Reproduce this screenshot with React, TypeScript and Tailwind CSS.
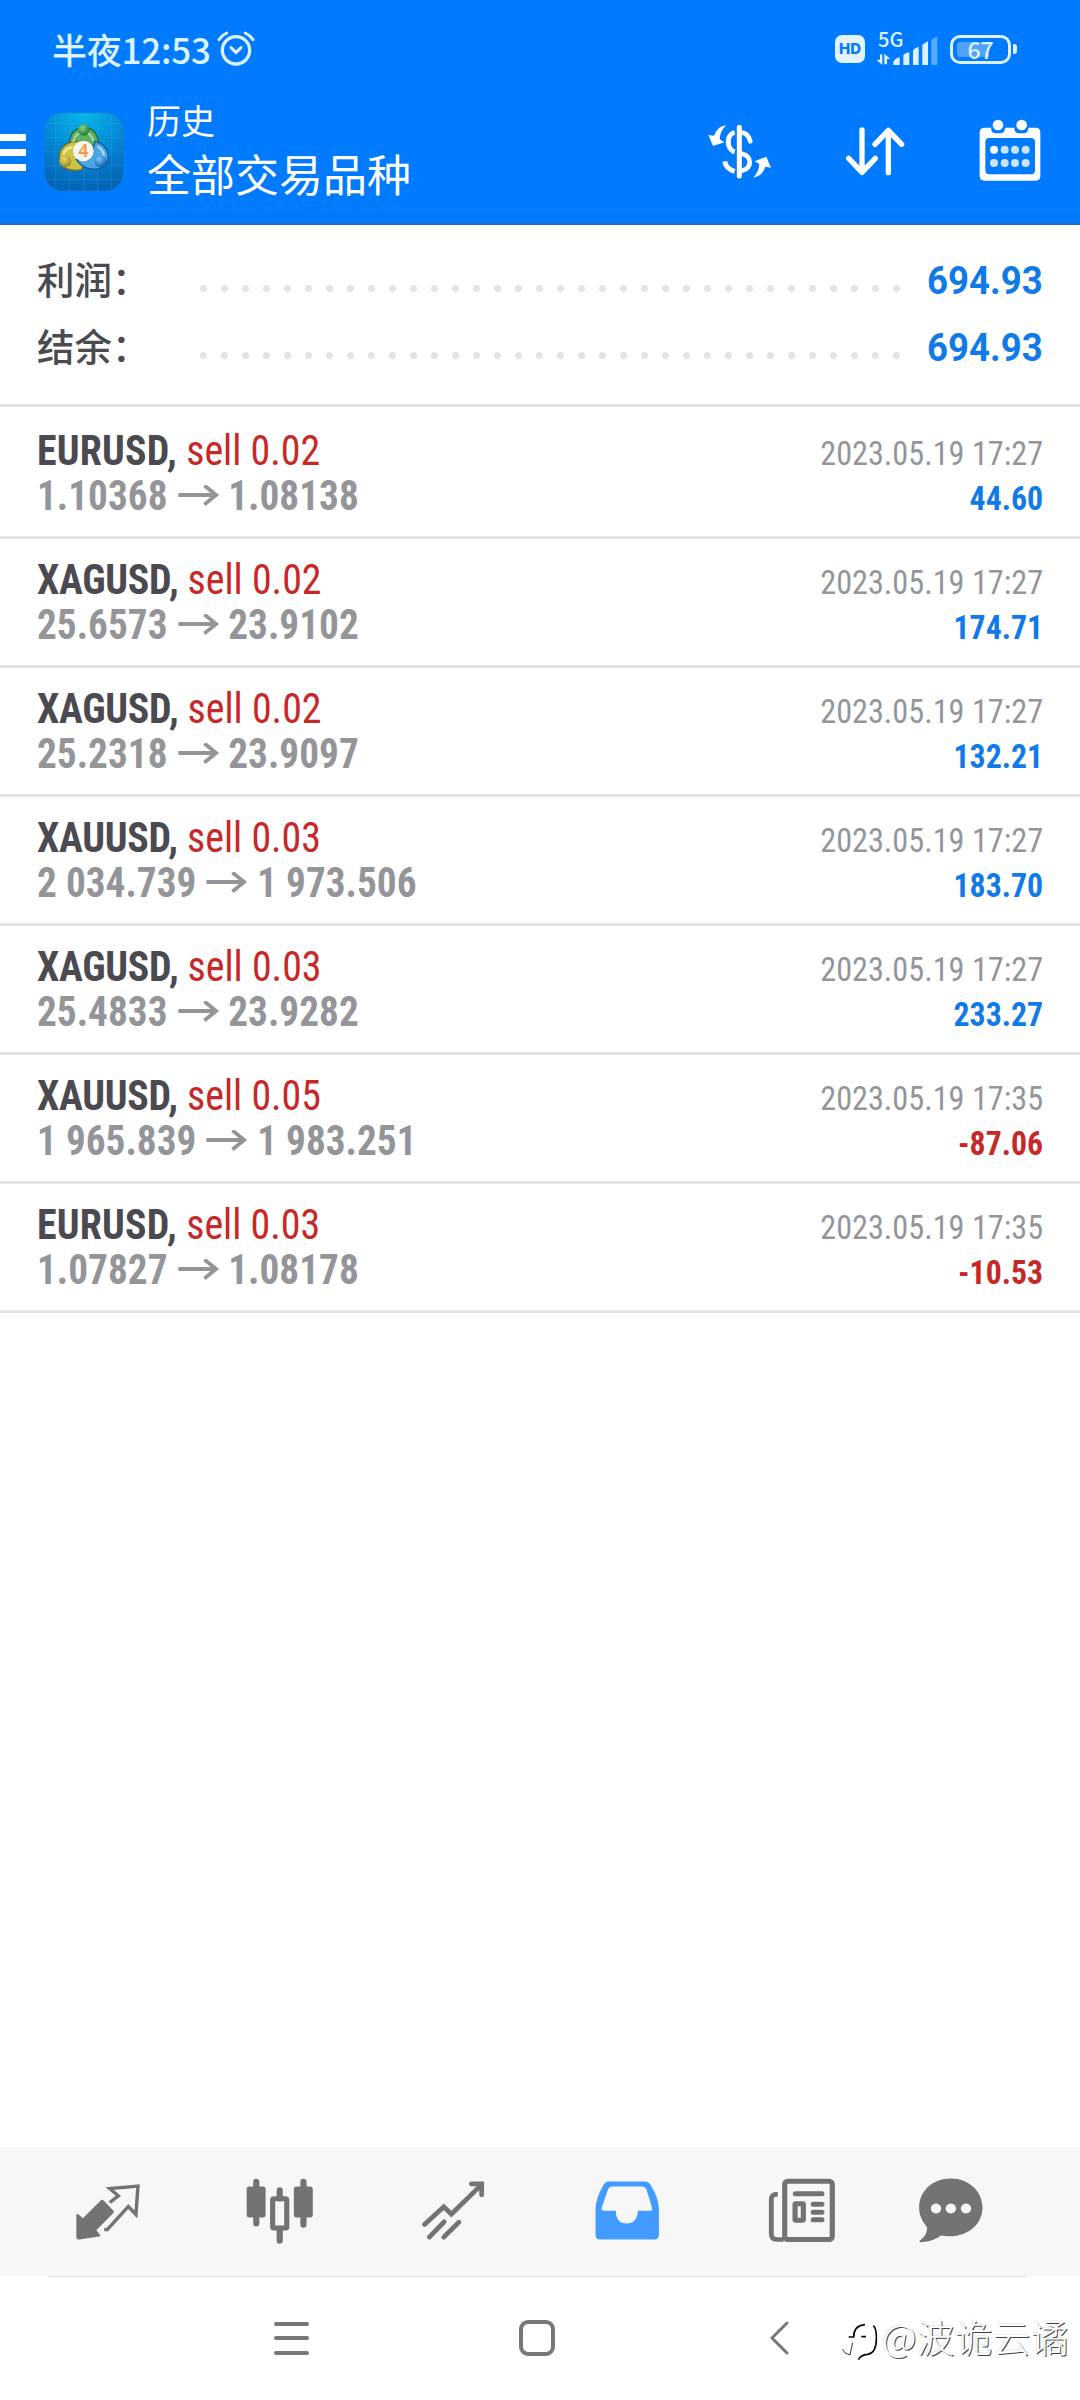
import { ReactNode } from 'react'

interface Deal {
  symbol: string
  volume: string
  open: string
  close: string
  time: string
  profit: string
}

const deals: Deal[] = [
  { symbol: 'EURUSD', volume: '0.02', open: '1.10368', close: '1.08138', time: '2023.05.19 17:27', profit: '44.60' },
  { symbol: 'XAGUSD', volume: '0.02', open: '25.6573', close: '23.9102', time: '2023.05.19 17:27', profit: '174.71' },
  { symbol: 'XAGUSD', volume: '0.02', open: '25.2318', close: '23.9097', time: '2023.05.19 17:27', profit: '132.21' },
  { symbol: 'XAUUSD', volume: '0.03', open: '2 034.739', close: '1 973.506', time: '2023.05.19 17:27', profit: '183.70' },
  { symbol: 'XAGUSD', volume: '0.03', open: '25.4833', close: '23.9282', time: '2023.05.19 17:27', profit: '233.27' },
  { symbol: 'XAUUSD', volume: '0.05', open: '1 965.839', close: '1 983.251', time: '2023.05.19 17:35', profit: '-87.06' },
  { symbol: 'EURUSD', volume: '0.03', open: '1.07827', close: '1.08178', time: '2023.05.19 17:35', profit: '-10.53' }
]

const StatusBar = () => (
  <div className="flex h-[98px] items-center justify-between pl-[52px] pr-[63px] text-[#dcf3ff]">
    <div className="flex items-center">
      <span className="text-[35px] leading-[50px] font-medium tracking-[-.2px] whitespace-nowrap">半夜12:53</span>
      <svg className="ml-[6px] h-[36px] w-[38px]" viewBox="648 95 114 108" fill="none" stroke="currentColor" strokeLinecap="round">
        <circle cx="705" cy="153" r="41" strokeWidth="10" />
        <path d="M690 145l15 15 15-15" strokeWidth="9" strokeLinejoin="round" />
        <path d="M654 121q9-13 23-20M756 121q-9-13-23-20" strokeWidth="9" />
      </svg>
    </div>
    <div className="flex items-center">
      <span className="flex h-[28px] w-[30px] items-center justify-center rounded-[7px] bg-[#e2f2ff] font-['Inter'] text-[15px] font-extrabold text-[#007aff]">
        HD
      </span>
      <div className="relative ml-[11px] h-[34px] w-[62px]">
        <span className="absolute -top-[3px] left-[2px] text-[20px] leading-[20px] font-medium">5G</span>
        <svg className="absolute inset-0 h-[34px] w-[62px]" viewBox="587 93 186 102" fill="currentColor">
          <path d="M599 160h7v32l-18-16h11zM612 190v-32l18 16h-10v16z" />
          <path d="M639 192v-10q8-12 19-13v23zM669 192v-30q8-8 18-8v38zM698 192v-44q7-9 17-11v55zM726 192v-60q8-8 17-11v71z" />
          <path d="M753 192v-76q8-8 18-9v85z" opacity=".4" />
        </svg>
      </div>
      <div className="relative ml-[12px] flex h-[29px] w-[61px] items-center rounded-[10px] border-[3px] border-current p-[4px]">
        <span className="h-full w-[32px] rounded-[3px] bg-[#4fa3ff]" />
        <span className="absolute inset-0 flex items-center justify-center text-[23px] leading-none font-medium">67</span>
      </div>
      <span className="ml-[2px] h-[10px] w-[4px] rounded-r-[3px] bg-current" />
    </div>
  </div>
)

const AppLogo = () => (
  <svg className="h-[80px] w-[80px]" viewBox="43 36 240 240">
    <defs>
      <radialGradient id="sky" cx=".5" cy="0" r="1">
        <stop offset="0" stopColor="#06b8ea" />
        <stop offset=".55" stopColor="#0486d4" />
        <stop offset="1" stopColor="#0463b4" />
      </radialGradient>
      <radialGradient id="green" cx=".4" cy=".3" r=".7">
        <stop offset="0" stopColor="#8fd08a" />
        <stop offset="1" stopColor="#1c7a35" />
      </radialGradient>
      <radialGradient id="gold" cx=".4" cy=".3" r=".7">
        <stop offset="0" stopColor="#eadf68" />
        <stop offset="1" stopColor="#94851a" />
      </radialGradient>
      <radialGradient id="azure" cx=".4" cy=".3" r=".7">
        <stop offset="0" stopColor="#7cc6f5" />
        <stop offset="1" stopColor="#1263b0" />
      </radialGradient>
    </defs>
    <rect x="44" y="38" width="237" height="235" rx="54" fill="url(#sky)" stroke="#1c78cf" strokeWidth="2" />
    <path d="M46 71h233M44 113h237M44 155h237M44 197h237M50 239h225M78 44v222M120 38v235M162 38v235M204 38v235M246 44v222" stroke="#3fb0ec" strokeWidth="2" opacity=".35" />
    <g strokeWidth="4">
      <path d="M120 152c-6-45 12-69 42-69s52 24 42 69l-24 20-42-16z" fill="#5fae62" stroke="#1d6b36" />
      <path d="M152 126c-35-6-63 14-63 48 0 28 28 42 66 35l14-32z" fill="#cfc345" stroke="#7c701a" />
      <path d="M196 124c35 9 46 38 36 62-14 30-68 30-92-8l44-12z" fill="#4ba4e3" stroke="#0f569c" />
    </g>
    <path d="M130 126q7-28 32-29 22 1 30 27" fill="none" stroke="#a9d8a2" strokeWidth="6" />
    <path d="M101 162q8-18 28-21" fill="none" stroke="#efe894" strokeWidth="7" />
    <path d="M203 139q20 10 19 30" fill="none" stroke="#a5d9fa" strokeWidth="7" />
    <circle cx="162" cy="90" r="17" fill="url(#green)" />
    <circle cx="107" cy="184" r="18" fill="url(#gold)" />
    <circle cx="212" cy="184" r="18" fill="url(#azure)" />
    <circle cx="161" cy="153" r="31" fill="#f4f6f4" />
    <text x="161" y="172" textAnchor="middle" fontFamily="Open Sans, sans-serif" fontSize="54" fontWeight="600" fill="#f79433">4</text>
  </svg>
)

const Toolbar = () => (
  <div className="flex h-[123px] items-start text-white">
    <div className="flex w-[26px] flex-col gap-[8px] pt-[36px]">
      <span className="h-[7px] bg-current" />
      <span className="h-[7px] bg-current" />
      <span className="h-[7px] bg-current" />
    </div>
    <div className="ml-[18px] pt-[14px]">
      <AppLogo />
    </div>
    <div className="ml-[23px] whitespace-nowrap">
      <div className="text-[34px] leading-[44px]">历史</div>
      <div className="text-[44px] leading-[62px]">全部交易品种</div>
    </div>
    <svg className="ml-auto mt-[24px] h-[60px] w-[66px]" viewBox="81 366 198 180" fill="none" stroke="currentColor">
      <path d="M164 397c-26 6-25 51 0 59M134 484q4 22 30 30" strokeWidth="15" />
      <path d="M178 382v146" strokeWidth="15" strokeLinecap="round" />
      <path d="M186 398q19 2 25 26M186 461c31 8 31 43 0 51" strokeWidth="14" strokeLinecap="round" />
      <path d="M139 376q-28 3-37 31l-17-2 14 33 34-11-14-9q1-25 20-42zM219 533q28-3 37-33l17 3-14-33-35 14 14 8q-1 24-19 41z" fill="currentColor" stroke="none" />
    </svg>
    <svg className="ml-[72px] mt-[24px] h-[60px] w-[60px]" viewBox="496 366 180 180" fill="none" stroke="currentColor" strokeWidth="16" strokeLinecap="round" strokeLinejoin="round">
      <path d="M547 390v127M507 475l40 42 40-42M626 518V391M586 433l40-42 40 42" />
    </svg>
    <svg className="ml-[74px] mr-[39px] mt-[21px] h-[62px] w-[62px]" viewBox="898 358 186 186" fill="currentColor">
      <path fillRule="evenodd" d="M914 384h20q0 17 15 17h12q15 0 15-17h28q0 17 15 17h12q15 0 15-17h22q14 0 14 14v131q0 14-14 14H914q-14 0-14-14V398q0-14 14-14zM929 415q-12 0-12 12v84q0 13 12 13h125q12 0 12-13v-84q0-12-12-12z" />
      <circle cx="955" cy="376" r="16" />
      <circle cx="1026" cy="376" r="16" />
      <circle cx="943" cy="450" r="12" />
      <g opacity=".8">
        <circle cx="975" cy="450" r="12" />
        <circle cx="1006" cy="450" r="12" />
        <circle cx="1038" cy="450" r="12" />
        <circle cx="943" cy="490" r="12" />
        <circle cx="975" cy="490" r="12" />
        <circle cx="1006" cy="490" r="12" />
        <circle cx="1038" cy="490" r="12" />
      </g>
    </svg>
  </div>
)

const SummaryRow = ({ label, value }: { label: string; value: string }) => (
  <div className="flex h-[67px] items-center">
    <span className="w-[163px] pb-[4px] text-[37.500px] font-medium whitespace-nowrap text-[#4b4a50]">{label}</span>
    <div className="mt-[15px] flex w-[700px] justify-between">
      {Array.from({ length: 34 }, (_, i) => (
        <span key={i} className="size-[7px] rounded-full bg-[#e4e4e4]" />
      ))}
    </div>
    <span className="ml-auto origin-right scale-x-95 font-['Roboto'] text-[38.500px] font-bold text-[#0f7ae8]">{value}</span>
  </div>
)

const DealRow = ({ deal }: { deal: Deal }) => (
  <div className="flex h-[129px] justify-between border-b-[3px] border-[#e3e3e3] px-[37px] font-['Roboto_Condensed','Roboto'] leading-[45px] [font-stretch:75%] whitespace-nowrap">
    <div className="pt-[18px] text-[42px]">
      <div className="origin-left scale-x-[.95]">
        <span className={`font-bold text-[#4b4a50] ${deal.symbol.startsWith('X') ? '-tracking-[.300px]' : 'tracking-[.200px]'}`}>{deal.symbol},</span>{' '}
        <span className="text-[#c62828]">sell {deal.volume}</span>
      </div>
      <div className="flex origin-left scale-x-[.935] items-center font-bold text-[#949599]">
        {deal.open}
        <svg className="mr-[10px] ml-[11px] h-[22px] w-[44px]" viewBox="0 0 44 22" fill="none" stroke="currentColor" strokeWidth="4">
          <path d="M0 10h41M28 .5L40.500 10 28 19.500" />
        </svg>
        {deal.close}
      </div>
    </div>
    <div className="pt-[21px] text-right text-[34px]">
      <div className="origin-right scale-x-[.948] text-[#949599]">{deal.time}</div>
      <div className={`origin-right scale-x-[.935] font-bold ${deal.profit.startsWith('-') ? 'text-[#c62828]' : 'text-[#0f7ae8]'}`}>{deal.profit}</div>
    </div>
  </div>
)

const Tab = ({ viewBox, children, className = 'w-[173.5px] text-[#737373]' }: { viewBox: string; children: ReactNode; className?: string }) => (
  <button className={`flex items-center justify-center ${className}`}>
    <svg className="h-[70px] w-[70px] overflow-visible" viewBox={viewBox} preserveAspectRatio="none" fill="currentColor" stroke="currentColor" strokeWidth="0">
      {children}
    </svg>
  </button>
)

const TabBar = () => (
  <div className="flex h-[129px] bg-[#f7f7f7] pl-[21px]">
    <Tab viewBox="211.3 139.500 203.300 210">
      <path d="M295 208q4 0 8 5l26 28q2 4-1 7l-49 51 12 15q0 3-4 4l-58 9q-8 0-8-8v-67q2-3 7 1l12 10 51-52q2-3 4-3z" />
      <path d="M318 216l25-20-25-22 82-7-6 85-22-24-61 69h-9" fill="none" strokeWidth="10" />
    </Tab>
    <Tab viewBox="715.1 139.500 203.300 210">
      <rect x="717" y="168" width="55" height="93" rx="8" />
      <rect x="854" y="168" width="55" height="93" rx="8" />
      <path d="M745 154v125M882 154v129M813 179v25M813 295v36" strokeWidth="18" strokeLinecap="round" />
      <rect x="792.500" y="204.500" width="41" height="88" rx="4" fill="none" strokeWidth="15" />
    </Tab>
    <Tab viewBox="1218.900 139.500 203.300 210">
      <path d="M1232 282l56-53 22 22 87-88M1246 320l43-46M1288 320l44-45" fill="none" strokeWidth="14" strokeLinecap="round" />
      <path d="M1368 160h30v33" fill="none" strokeWidth="14" strokeLinecap="round" />
    </Tab>
    <Tab viewBox="154.600 139.500 203.300 210" className="w-[173.5px] text-[#429cff]">
      <path fillRule="evenodd" d="M200 153h107q9 0 14 9 24 39 25 73v78q0 14-13 14H175q-13 0-13-14v-78q1-34 24-73 5-9 14-9zM212 168q-10 0-14 9l-18 55q-2 9 6 9h35q0 38 31 38t33-38h35q8 0 6-9l-16-55q-4-9-12-9z" />
    </Tab>
    <Tab viewBox="658.500 139.500 203.300 210">
      <path d="M690 192q-19-2-19 14v104q0 17 16 17h20" fill="none" strokeWidth="14" />
      <rect x="710" y="152" width="138" height="175" rx="9" fill="none" strokeWidth="15" />
      <path d="M741 190h77M793 221h25M793 245h25M793 268h25" strokeWidth="15" strokeLinecap="round" />
      <rect x="740" y="220" width="24" height="49" rx="2" fill="none" strokeWidth="15" />
    </Tab>
    <Tab viewBox="1091.900 139.500 203.300 210" className="w-[125px] text-[#737373]">
      <path fillRule="evenodd" d="M1193 144c53 0 92 39 92 87 0 57-54 97-121 84-19 14-38 20-60 20q-5-3 3-8c12-10 17-20 17-37-15-19-23-36-23-59 0-49 39-87 92-87zM1150 219a15 15 0 1 0 .1 0zM1193 219a15 15 0 1 0 .1 0zM1237 219a15 15 0 1 0 .1 0z" />
    </Tab>
  </div>
)

const SystemNav = () => (
  <div className="relative flex h-[124px] items-center pl-[274px] text-[#777777]">
    <div className="absolute left-[48px] top-0 h-px w-[978px] bg-[#e0e0e0]" />
    <div className="flex h-[33px] w-[35px] flex-col justify-between">
      <span className="h-[4px] rounded-full bg-current" />
      <span className="h-[4px] rounded-full bg-current" />
      <span className="h-[4px] rounded-full bg-current" />
    </div>
    <span className="ml-[210px] h-[36px] w-[36px] rounded-[9px] border-[4px] border-current" />
    <svg className="ml-[215px] h-[34px] w-[19px]" viewBox="0 0 19 34" fill="none" stroke="currentColor" strokeWidth="3" strokeLinecap="round" strokeLinejoin="round">
      <path d="M17 2L2 17l15 15" />
    </svg>
    <div className="absolute left-[842px] top-[35px] flex items-center">
      <svg className="mt-[12px] h-[38px] w-[36px]" viewBox="36 48 108 114" fill="none">
        <path d="M38 127q5 14 22 17l8-37" stroke="#333" strokeWidth="3" />
        <path d="M56 90h15q0-34 34-37M94 89h14M130 56q10 8 9 42-1 40-26 44-20 1-28 16" stroke="#0a0a0a" strokeWidth="5" />
      </svg>
      <span className="ml-[4px] text-[38px] leading-[48px] font-light whitespace-nowrap text-white [text-shadow:1px_1px_0_#444,-1px_-1px_0_#ececec]">@波诡云谲</span>
    </div>
  </div>
)

export default function App() {
  return (
    <div className="flex h-[2400px] w-[1080px] flex-col overflow-hidden bg-white font-['Noto_Sans_CJK_SC',sans-serif]">
      <header className="h-[225px] border-b-2 border-[#1c6cc4] bg-[#007aff]">
        <StatusBar />
        <Toolbar />
      </header>
      <section className="h-[182px] border-b-[3px] border-[#e3e3e3] px-[37px] pt-[22px]">
        <SummaryRow label="利润：" value="694.93" />
        <SummaryRow label="结余：" value="694.93" />
      </section>
      <main className="flex-1 pt-[3px]">
        {deals.map((deal, index) => (
          <DealRow key={index} deal={deal} />
        ))}
      </main>
      <TabBar />
      <SystemNav />
    </div>
  )
}
